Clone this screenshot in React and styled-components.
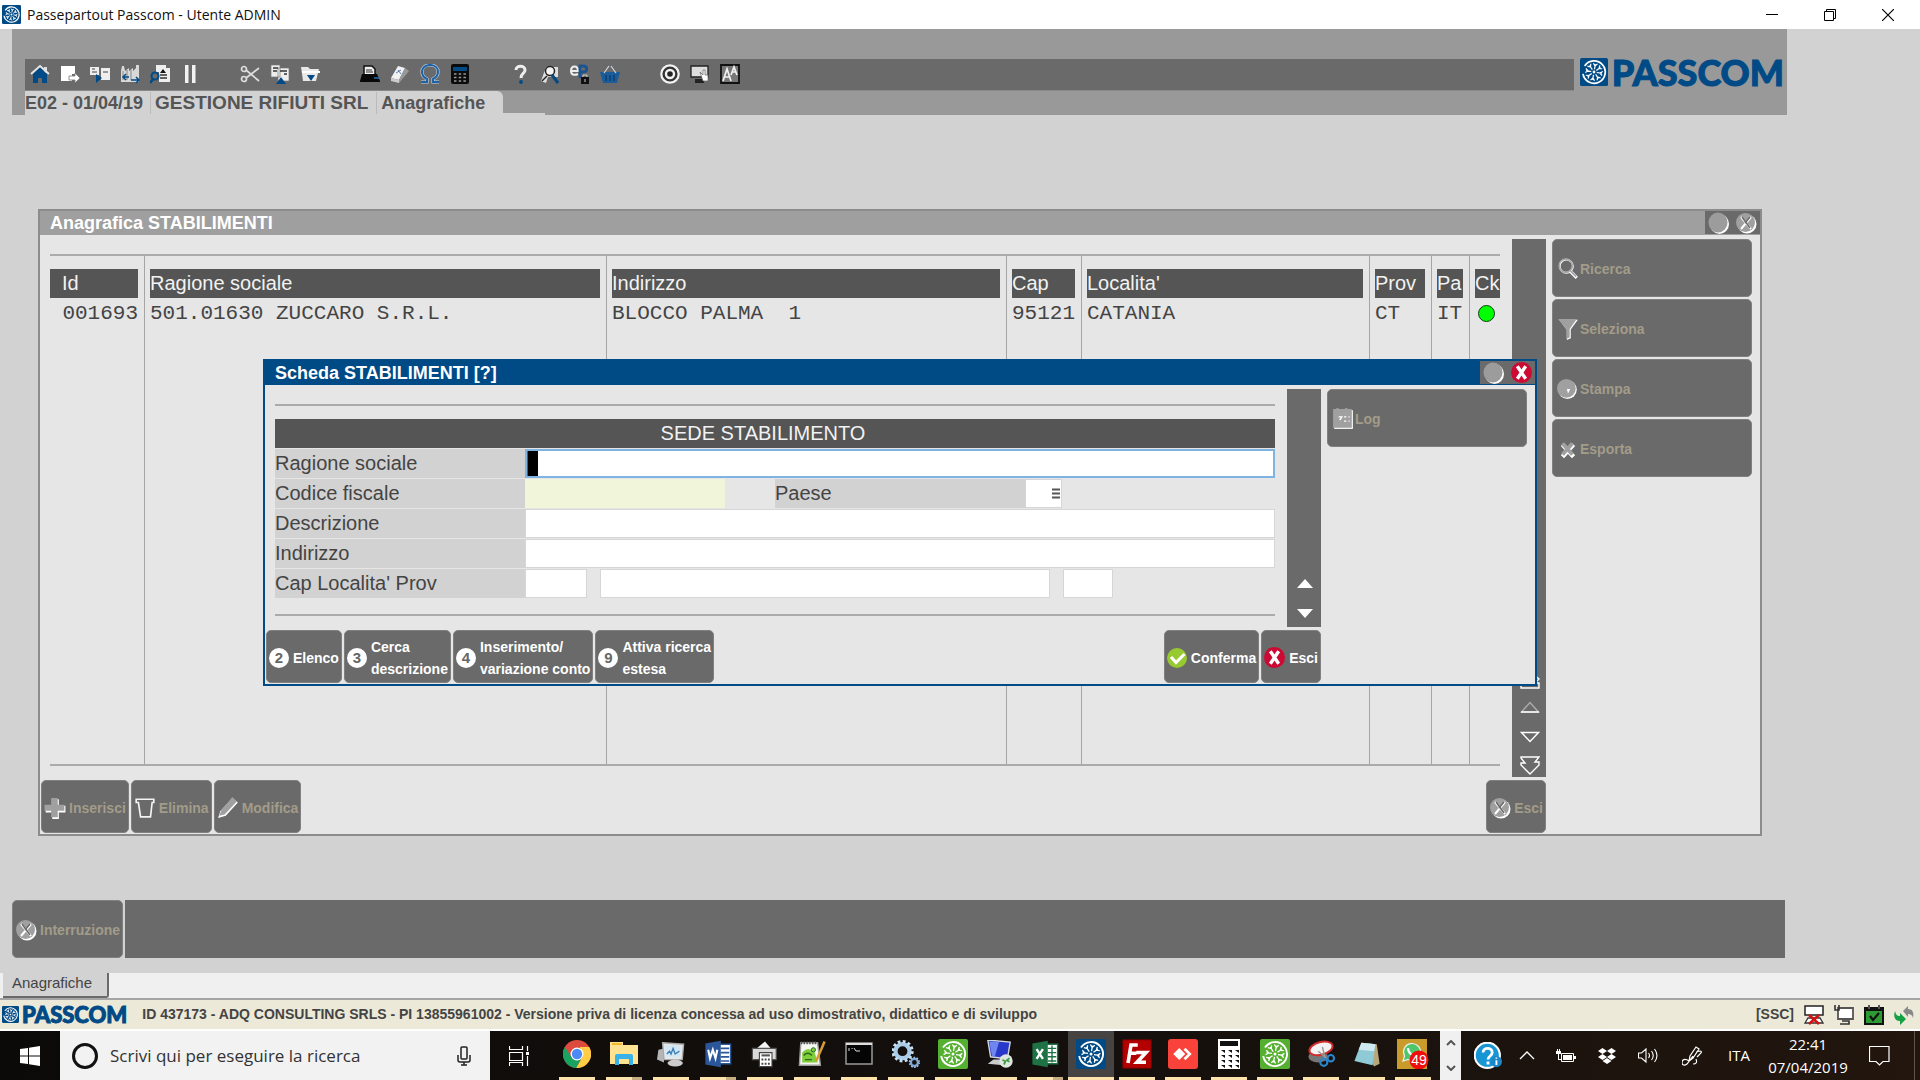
import React from "react";
import styled, { createGlobalStyle, css } from "styled-components";

const sans = '"Liberation Sans", Arial, sans-serif';
const mono = '"Liberation Mono", monospace';
const system = '"Open Sans", "Segoe UI", sans-serif';
const blue = "#004a86";

const GlobalStyle = createGlobalStyle`
  *, *::before, *::after { box-sizing: border-box; }
  body { margin: 0; background: #d2d2d2; font-family: ${sans}; color: #444; }
  button, input { font: inherit; color: inherit; margin: 0; padding: 0; border: 0; border-radius: 0; background: none; outline: 0; }
  svg { display: block; flex: none; }
`;

/* ---------- shell ---------- */

const Screen = styled.div`
  display: flex;
  flex-direction: column;
  min-height: 100vh;
`;

const TitleBar = styled.header`
  display: flex;
  align-items: center;
  height: 29px;
  padding: 0 3px 0 2px;
  background: #fff;
  color: #111;
  font: 14px/28px ${system};
`;

const AppName = styled.span`
  flex: 1;
  padding-left: 6px;
`;

const CaptionButton = styled.button`
  display: grid;
  place-items: center;
  width: 58px;
  height: 29px;
`;

const Banner = styled.div`
  display: flex;
  flex-direction: column;
  height: 86px;
  margin: 0 133px 0 12px;
  background: #999;
`;

const ToolRow = styled.div`
  display: flex;
  margin-top: 28px;
  height: 34px;
  padding: 0 3px 0 13px;
`;

const ToolBar = styled.div`
  display: flex;
  flex: 1;
  align-self: flex-end;
  gap: 30px;
  height: 32px;
  background: #6a6a6a;
  border-bottom: 1px solid #888;
`;

const ToolGroup = styled.div`
  display: flex;
`;

const ToolButton = styled.button`
  display: grid;
  place-items: center;
  width: 30px;
  height: 30px;
`;

const Brand = styled.div`
  display: flex;
  align-items: center;
  gap: ${(p) => (p.$small ? 3 : 4)}px;
  height: ${(p) => (p.$small ? 29 : 30)}px;
  margin-left: ${(p) => (p.$small ? 0 : 6)}px;
  color: ${blue};
  font: 900 ${(p) => (p.$small ? 22 : 36)}px/1 Lato, sans-serif;
  -webkit-text-stroke: 1px ${blue};
`;

const CrumbRow = styled.div`
  display: flex;
  align-items: flex-end;
  height: 24px;
  padding-left: 13px;
`;

const Crumbs = styled.nav`
  display: flex;
  align-items: center;
  height: 24px;
  padding-right: 18px;
  background: #d2d2d2;
  border-radius: 0 6px 0 0;
  color: #555;
  font: bold 18px/22px ${sans};
`;

const CrumbFoot = styled.div`
  width: 42px;
  height: 2px;
  background: #d2d2d2;
`;

const Crumb = styled.span`
  padding: 0 ${(p) => (p.$last ? 0 : p.$wide ? 8 : 7)}px 0 ${(p) => (p.$first ? 0 : 4)}px;
  border-right: ${(p) => (p.$last ? "0" : "1px solid #bbb")};
  font-size: ${(p) => (p.$wide ? 19 : 18)}px;
`;

const Workspace = styled.main`
  position: relative;
  display: flex;
  flex: 1;
  flex-direction: column;
  padding: 94px 158px 64px 38px;
`;

/* ---------- windows ---------- */

const Frame = styled.section`
  display: flex;
  flex-direction: column;
  background: #e6e6e6;
  border: 2px solid ${(p) => (p.$active ? blue : "#8c8c8c")};
  ${(p) =>
    p.$active
      ? css`
          position: absolute;
          top: 244px;
          left: 263px;
          right: 383px;
        `
      : css`
          flex: 1;
        `}
`;

const FrameTitle = styled.div`
  display: flex;
  justify-content: space-between;
  height: 24px;
  padding-left: 10px;
  background: ${(p) => (p.$active ? blue : "#9f9f9f")};
  color: #fff;
  font: bold 18px/24px ${sans};
`;

const FrameTools = styled.div`
  display: flex;
  justify-content: space-between;
  align-items: center;
  width: 55px;
  height: 23px;
  padding: 0 3px;
  background: #6a6a6a;
`;

const RoundButton = styled.button`
  display: grid;
  place-items: center;
`;

const FrameBody = styled.div`
  display: flex;
  flex: 1;
  padding-top: 4px;
`;

const FrameMain = styled.div`
  display: flex;
  flex: 1;
  flex-direction: column;
  min-width: 0;
`;

const Upper = styled.div`
  display: flex;
  flex: 1;
  gap: 12px;
  padding-left: 10px;
`;

const Content = styled.div`
  display: flex;
  flex: 1;
  flex-direction: column;
  margin: 15px 0 11px;
  border: solid #ababab;
  border-width: 2px 0;
`;

const ScrollRail = styled.div`
  display: flex;
  flex-direction: column;
  justify-content: flex-end;
  width: 34px;
  background: #6a6a6a;
`;

const RailButton = styled.button`
  display: grid;
  place-items: center;
  width: 34px;
  height: ${(p) => p.$h || 30}px;
  padding: 2px 0 0 2px;
`;

const FrameFooter = styled.div`
  display: flex;
  gap: 2px;
  padding: 3px 0 1px 1px;
`;

const Spacer = styled.div`
  flex: 1;
`;

const SideBar = styled.aside`
  display: flex;
  flex-direction: column;
  gap: 2px;
  width: 214px;
  padding: 0 8px 0 6px;
`;

const ActionButton = styled.button`
  display: flex;
  align-items: center;
  gap: ${(p) => (p.$side ? 1 : p.disabled ? 3 : 4)}px;
  min-height: ${(p) => (p.$tall || p.$side ? 58 : 53)}px;
  padding: 2px ${(p) => (p.$side ? 4 : 2)}px 0;
  background: #6a6a6a;
  border: 1px solid #808080;
  border-radius: 5px;
  color: ${(p) => (p.disabled ? "#a29c89" : "#fff")};
  font: bold 14px/22px ${sans};
  text-align: left;
  white-space: pre-line;
`;

/* ---------- list ---------- */

const Table = styled.table`
  flex: 1;
  width: 100%;
  border-collapse: separate;
  border-spacing: 0;
  table-layout: fixed;
`;

const Col = styled.col`
  width: ${(p) => (p.$w ? p.$w + "px" : "auto")};
`;

const HeadCell = styled.th`
  height: 43px;
  padding: 12px 6px 1px 5px;
  border-right: 1px solid #a5a5a5;
  color: #f2f2f2;
  font: 20px/29px ${sans};
  text-align: left;
  white-space: nowrap;
  &:first-child { padding-left: 0; }
  &:last-child { padding-right: 0; border-right: 0; }
`;

const HeadFill = styled.span`
  display: block;
  overflow: hidden;
  padding-left: ${(p) => (p.$inset ? 12 : 0)}px;
  background: #555;
`;

const Cell = styled.td`
  height: 30px;
  padding: 0 6px 0 5px;
  border-right: 1px solid #a5a5a5;
  color: #444;
  font: 21px/30px ${mono};
  text-align: ${(p) => (p.$right ? "right" : "left")};
  white-space: pre;
  vertical-align: top;
  &:first-child { padding-left: 0; }
  &:last-child { padding-right: 0; border-right: 0; }
`;

const FillerCell = styled(Cell)`
  height: auto;
`;

const Status = styled.span`
  display: block;
  width: 17px;
  height: 17px;
  margin: 6px 0 0 3px;
  background: #00ff00;
  border: 1px solid #143c14;
  border-radius: 50%;
`;

/* ---------- form ---------- */

const Form = styled.form`
  display: flex;
  flex-direction: column;
  gap: 1px;
  padding: 13px 0 16px;
`;

const FormHeading = styled.h2`
  margin: 0;
  padding-right: 24px;
  background: #555;
  color: #f2f2f2;
  font: 20px/29px ${sans};
  text-align: center;
`;

const FormRow = styled.div`
  display: flex;
  height: 29px;
`;

const Label = styled.label`
  width: 250px;
  background: #d2d2d2;
  color: #444;
  font: 20px/29px ${sans};
`;

const Field = styled.span`
  display: flex;
  flex: ${(p) => (p.$w ? "none" : 1)};
  width: ${(p) => (p.$w ? p.$w + "px" : "auto")};
  margin-right: ${(p) => p.$after || 0}px;
  align-items: center;
  background: ${(p) => (p.$tint ? "#f1f6db" : "#fff")};
  border: ${(p) => (p.$focus ? "2px solid #7fb4e2" : p.$tint ? "0" : "1px solid #d6d6d6")};
`;

const Input = styled.input`
  flex: 1;
  min-width: 0;
  height: 100%;
  font: 20px/24px ${mono};
`;

const BlockCaret = styled.span`
  width: 11px;
  height: 25px;
  background: #000;
  border-left: 1px solid #8a5020;
`;

const ListButton = styled.button`
  display: grid;
  place-items: center;
  width: 10px;
  height: 100%;
`;

/* ---------- bottom ---------- */

const CommandBar = styled.div`
  display: flex;
  gap: 2px;
  margin: 0 135px 15px 12px;
`;

const CommandFill = styled.div`
  flex: 1;
  background: #6a6a6a;
`;

const TabStrip = styled.div`
  display: flex;
  height: 25px;
  padding-left: 3px;
  background: #f0f0f0;
`;

const Tab = styled.button`
  height: 25px;
  padding: 0 15px 3px 9px;
  background: #d2d2d2;
  border: solid #6a6a6a;
  border-width: 0 2px 2px 0;
  border-radius: 0 0 3px 0;
  font: 15px/20px ${sans};
`;

const StatusBar = styled.footer`
  display: flex;
  align-items: center;
  gap: 10px;
  height: 33px;
  padding: 0 6px 0 2px;
  background: #ece9d8;
  border-top: 2px solid #a5a5a5;
  border-bottom: 2px solid #fff;
  color: #444;
  font: bold 14px/29px ${sans};
`;

const License = styled.span`
  flex: 1;
  padding-left: 5px;
`;

const TaskBar = styled.div`
  display: flex;
  height: 49px;
  background: linear-gradient(90deg, #0c0a09, #15100d 60%, #22160e);
  color: #fff;
  font: 15px/23px ${system};
`;

const TaskButton = styled.button`
  display: grid;
  place-items: center;
  flex: none;
  width: ${(p) => p.$w}px;
`;

const Search = styled.label`
  display: flex;
  align-items: center;
  width: 430px;
  padding: 0 16px 0 12px;
  background: #f2f2f2;
`;

const SearchInput = styled.input`
  flex: 1;
  min-width: 0;
  padding-left: 12px;
  color: #333;
  font: 17px/24px ${system};
  &::placeholder { color: #333; opacity: 1; }
`;

const Apps = styled.div`
  display: grid;
  flex: 1;
  grid-template-columns: repeat(9, 47fr) repeat(10, 46fr);
  margin: 0 4px 0 6px;
`;

const AppButton = styled.button`
  display: grid;
  place-items: center;
  grid-template-rows: 46px 3px;
  background: ${(p) => (p.$on ? "#464443" : "none")};
  &::after {
    content: "";
    width: ${(p) => (p.$on ? "100%" : "36px")};
    height: 3px;
    background: linear-gradient(90deg, #fde3ab 72%, ${(p) => (p.$many ? "#c7ae82" : "#fde3ab")} 72%);
  }
`;

const Stepper = styled.div`
  display: flex;
  flex-direction: column;
  width: 21px;
  background: #f0f0f0;
`;

const StepButton = styled.button`
  display: grid;
  flex: 1;
  place-items: center;
`;

const Tray = styled.div`
  display: flex;
  align-items: center;
  width: 459px;
  padding-left: 7px;
`;

const Clock = styled.time`
  width: 92px;
  text-align: center;
`;

const ShowDesktop = styled.div`
  align-self: stretch;
  width: 1px;
  margin-left: 10px;
  background: #5d544e;
`;

/* ---------- drawings ---------- */

const Wheel = ({ size, bg = blue }) => (
  <svg width={size} height={size} viewBox="0 0 30 30">
    <rect width="30" height="30" rx="2" fill={bg} />
    <g fill="none" stroke="#fff">
      <path d="M5 8.500A12 12 0 1 1 3.200 17" strokeWidth="1.900" />
      {[0, 45, 90, 135, 180, 225, 270, 315].map((a) => (
        <path key={a} d="M15 12V6.500M12.800 5.800L15 8.500l2.200-2.700" strokeWidth="1.300" transform={`rotate(${a + 10} 15 15)`} />
      ))}
    </g>
    <circle cx="15" cy="15" r="1.500" fill="#fff" />
  </svg>
);

const Svg = ({ s = 20, h, vb = "0 0 20 20", children }) => (
  <svg width={s} height={h || s} viewBox={vb}>{children}</svg>
);

const tools = [
  [
    ["Home", <Svg><path d="M14 3h3v6h-3z" fill="#ddd" /><path d="M3 10l7-7 7 7v9h-5v-5H8v5H3z" fill={blue} /><path d="M1 10l9-8 9 8" fill="none" stroke="#e6e6e6" strokeWidth="1.800" /></Svg>],
    ["Esci", <Svg><path d="M1 2h14v8h-3v7H1z" fill="#fff" /><path d="M9 12h6V9l5 5-5 5v-3H9z" fill="#fff" stroke="#777" strokeWidth=".8" /></Svg>],
    ["Sposta", <Svg><path d="M0 3h9v8H0zM11 4h9v12h-9z" fill="#eee" /><path d="M2 5h3M2 8h5M13 8h5" stroke="#444" strokeWidth="1.200" /><path d="M6 10l6 4-6 5z" fill={blue} /></Svg>],
    ["Azienda", <Svg><path d="M1 18V7l1-5h2l1 5 4-3v3l4-3v3l3-3V1h3v17z" fill="#d8d8d8" /><path d="M3 7v9M7 6v10M11 6v10" stroke="#888" /><path d="M9 13H4m2-3l-3 3 3 3M11 16h7m-2-3l3 3-3 3" fill="none" stroke={blue} strokeWidth="1.500" /></Svg>],
    ["Trova documento", <Svg><path d="M6 1h10v3h4v14H9V8H6z" fill="#eee" /><path d="M10 9l3-4 3 4z" fill="#111" /><path d="M10 11h7M10 14h7" stroke="#333" strokeWidth="1.300" /><circle cx="5" cy="12" r="3.500" fill="none" stroke={blue} strokeWidth="2" /><path d="M3 15l-3 4" stroke={blue} strokeWidth="2.500" /></Svg>],
    ["Pausa", <Svg><path d="M5 1h3.500v18H5zM12 1h3.500v18H12z" fill="#f2f2f2" /></Svg>],
  ],
  [
    ["Taglia", <Svg><g fill="none" stroke="#ddd" strokeWidth="1.700"><circle cx="4" cy="5" r="2.500" /><circle cx="4" cy="15" r="2.500" /><path d="M6 6l13 11M6 14L19 4" /></g></Svg>],
    ["Copia", <Svg><path d="M1 1h9v12H1zM8 4h11v13H8z" fill="#eee" stroke="#777" strokeWidth=".7" /><path d="M3 4h5M3 7h4M10 7h7M14 10h3" stroke="#333" strokeWidth="1.500" /><path d="M6 20l5-7 5 7z" fill={blue} /></Svg>],
    ["Apri", <Svg><path d="M1 3h7l2 2h9l-3 12H3z" fill="#e8e8e8" /><path d="M2 8h18" stroke="#fff" strokeWidth="2" /><path d="M7 11h8l-4 6z" fill={blue} /></Svg>],
  ],
  [
    ["Stampa", <Svg><path d="M4 10V2h8l3 3v5" fill="#eee" stroke="#111" strokeWidth="1.500" /><path d="M6 6h6M6 8h7" stroke="#333" /><path d="M0 17l2-7h15l3 7v1H0z" fill="#080808" /><path d="M14 14h5" stroke="#2b6db0" strokeWidth="1.500" /></Svg>],
    ["Gomma", <Svg><path d="M1 14L8 2l7 2-6 12z" fill="#f2f2f2" /><path d="M1 14l8 2v3l-8-2z" fill="#ccc" /><path d="M9 16l6-12 4 3-10 12z" fill="#999" /><path d="M6 9l5-3M8 6l3 4" stroke="#5f7fb0" /></Svg>],
    ["Simboli", <Svg><path d="M1 18h6v-3C3 13 2 10 2 8c0-4 3-7 8-7s8 3 8 7c0 2-1 5-5 7v3h6" fill="none" stroke="#c9d6e4" strokeWidth="3.200" /><path d="M1 18h6v-3C3 13 2 10 2 8c0-4 3-7 8-7s8 3 8 7c0 2-1 5-5 7v3h6" fill="none" stroke="#1f63a5" strokeWidth="2.100" /></Svg>],
    ["Calcolatrice", <Svg><rect x="1" width="18" height="20" rx="2" fill="#0b0b0b" /><path d="M3 3h14v4H3z" fill={blue} /><path d="M4 10h12M4 13.500h12M4 17h12" stroke="#999" strokeWidth="1.500" strokeDasharray="2.500 2.200" /></Svg>],
  ],
  [
    ["Aiuto", <Svg><path d="M6 6c0-5 9-5 9 0 0 4-4 3-4 8" fill="none" stroke="#eee" strokeWidth="3" /><circle cx="11" cy="18" r="1.900" fill={blue} /></Svg>],
    ["Cerca", <Svg><path d="M1 17L6 3h12v10H8l-2 6z" fill="#ddd" /><circle cx="10" cy="7" r="4.500" fill="#f4f4f4" stroke="#222" strokeWidth="1.500" /><path d="M12 11l6 8" stroke={blue} strokeWidth="3" /><path d="M2 17l5-5" stroke="#222" strokeWidth="1.500" /></Svg>],
    ["Posta certificata", <Svg><path d="M1 7h7c0-6-7-6-7 0 0 5 5 4 7 3" fill="none" stroke="#eee" strokeWidth="2" /><path d="M10 14V2h3c5 0 5 6 0 6h-3" fill="none" stroke="#1a5592" strokeWidth="2.800" /><path d="M11 13h8v7h-8z" fill="#111" /><path d="M13 13v-2h4v2M15 15v3" fill="none" stroke="#ccc" /></Svg>],
    ["Negozio", <Svg><path d="M0 8h20l-3 11H3z" fill="#1c5c9a" /><path d="M4 9l5-7M16 9l-5-7" fill="none" stroke="#d0d8e0" strokeWidth="1.200" /><path d="M6 11v6M10 11v6M14 11v6" fill="none" stroke="#0a3c6c" strokeWidth="1.300" /></Svg>],
  ],
  [
    ["Obiettivo", <Svg><circle cx="10" cy="10" r="8.700" fill="#333" stroke="#f2f2f2" strokeWidth="2.200" /><circle cx="10" cy="10" r="4" fill="#222" stroke="#f2f2f2" strokeWidth="2.400" /></Svg>],
    ["Schermo", <Svg><path d="M1 2h17v11H1z" fill="#ddd" stroke="#222" strokeWidth="1.300" /><path d="M5 15h9v4H5z" fill="#222" /><path d="M10 8l3 3V6h2v5h3v6h-5z" fill="#fff" stroke="#666" strokeWidth=".7" /></Svg>],
    ["Caratteri", <Svg><path d="M1 1h18v18H1z" fill="#777" stroke="#111" strokeWidth="1.800" /><path d="M3 17L7 5l4 12M4 13h6M11 11l3-8 3 8M12 8h4" fill="none" stroke="#f2f2f2" strokeWidth="1.700" /></Svg>],
  ],
];

const Knob = () => (
  <Svg s={21} h={22} vb="0 0 21 22"><ellipse cx="11.500" cy="12" rx="9.500" ry="10" fill="#fff" /><ellipse cx="10" cy="10.500" rx="9.500" ry="10" fill="#9c9c9c" /></Svg>
);
const GreyX = () => (
  <Svg s={22} h={22} vb="0 0 22 22"><circle cx="12" cy="12" r="9.500" fill="#fff" /><circle cx="10.500" cy="10.500" r="9.500" fill="#a0a0a0" /><path d="M6 5l10 12M16 5L6 17" stroke="#fff" strokeWidth="2" /><path d="M7 5l8 11M15 5l-5 6" stroke="#6a6a6a" strokeWidth="1.500" /></Svg>
);
const RedX = () => (
  <Svg s={21} h={21}><circle cx="10" cy="10" r="10" fill="#cc0a33" /><path d="M6 4l8 12M14 4L6 16" stroke="#fff" strokeWidth="3.200" /></Svg>
);
const GreenCheck = () => (
  <Svg s={20} h={20}><circle cx="10" cy="10" r="10" fill="#97c930" /><path d="M4 9l5 5.500L17.500 6" fill="none" stroke="#fff" strokeWidth="3" /></Svg>
);

const Badge = styled.span`
  display: grid;
  flex: none;
  place-items: center;
  width: 20px;
  height: 20px;
  border-radius: 50%;
  background: #fff;
  color: #666;
  font: bold 15px/20px ${sans};
`;

const disabledIcons = {
  search: <Svg s={22}><circle cx="8.500" cy="7.500" r="6" fill="none" stroke="#fff" strokeWidth="1.600" /><circle cx="8" cy="7" r="6" fill="none" stroke="#aaa" strokeWidth="1.500" /><path d="M12 12l6 6" stroke="#fff" strokeWidth="3" /><path d="M12 11.500l5.500 5.500" stroke="#a5a5a5" strokeWidth="1.500" /></Svg>,
  filter: <Svg s={22}><path d="M2 1.500h17l-6.500 9v8L9 20v-9z" fill="#fff" /><path d="M1 1h17l-6.500 9v7.500L8.500 19v-9z" fill="#a0a0a0" /></Svg>,
  print: <Svg s={22}><circle cx="9.500" cy="10.500" r="8.500" fill="#fff" /><circle cx="8.500" cy="9.500" r="8.500" fill="#a0a0a0" /><path d="M9 10h3l-2 4z" fill="#fff" /></Svg>,
  export: <Svg s={22}><path d="M5 6l10 11M15 6L5 17" stroke="#fff" strokeWidth="4" /><path d="M5 5l9 10M14 5L5 15" stroke="#a0a0a0" strokeWidth="3.500" /></Svg>,
  log: <Svg s={22}><path d="M2 2h17v17H2z" fill="#fff" /><path d="M1 1h3V0h2v1h6V0h2v1h4v17H1z" fill="#a0a0a0" /><path d="M6 8h3l-2 3M11 8h2M15 8h1M11 12h2M15 12h1" fill="none" stroke="#fff" strokeWidth="1.200" /></Svg>,
  plus: <Svg s={22}><path d="M7.500 2h6v6h6v6h-6v6h-6v-6h-6V8h6z" fill="#fff" /><path d="M6.500 1h6v6h6v5.500h-6v6h-6v-6h-6V7h6z" fill="#a0a0a0" /></Svg>,
  bin: <Svg s={22}><path d="M2 2h16v3h-1.500L15 18H6L4 5H2z" fill="none" stroke="#f4f4f4" strokeWidth="1.500" /></Svg>,
  pencil: <Svg s={22}><path d="M1 19l2-6L14 1l5 4L8 17z" fill="#fff" /><path d="M2 17l2-5L14 0l4 4L7 16z" fill="#a0a0a0" /></Svg>,
  stop: <GreyX />,
};

const UpOutline = () => <Svg s={20} h={12} vb="0 0 20 12"><path d="M1.500 11L10 1.500 18.500 11z" fill="none" stroke="#aaa" strokeWidth="1.500" /><path d="M1 11h18" stroke="#fff" strokeWidth="1.500" /></Svg>;
const DownOutline = () => <Svg s={20} h={12} vb="0 0 20 12"><path d="M1.500 1.500L10 10.500 18.500 1.500z" fill="none" stroke="#fff" strokeWidth="1.400" /></Svg>;
const PageUp = () => <Svg s={20} h={19} vb="0 0 20 19"><path d="M1 18h18v-5h-4l4-4L10 1 1 9l4 4H1z" fill="none" stroke="#fff" strokeWidth="1.400" /></Svg>;
const PageDown = () => <Svg s={20} h={19} vb="0 0 20 19"><path d="M1 1h18l-4 5h4v3l-9 9-9-9V7h4L1 2z" fill="none" stroke="#fff" strokeWidth="1.400" /></Svg>;

const apps = [
  { n: "Chrome", i: <Svg s={28}><circle cx="10" cy="10" r="10" fill="#dd4b3e" /><path d="M1.300 5A10 10 0 0 0 9.500 20l4.200-8L6 12z" fill="#1aa260" /><path d="M18.700 5A10 10 0 0 1 9.500 20L14 12l-2-7z" fill="#ffce44" /><circle cx="10" cy="10" r="4.600" fill="#fff" /><circle cx="10" cy="10" r="3.700" fill="#4c8bf5" /></Svg> },
  { n: "Esplora file", many: 1, i: <Svg s={28} h={24} vb="0 0 28 24"><path d="M0 0h13v3h15v19H0z" fill="#ffe391" /><path d="M2 1h10v2H2z" fill="#f4b72b" /><path d="M5 23v-9q0-2 2-2h14q2 0 2 2v9h-4v-6H9v6z" fill="#37b3ea" /></Svg> },
  { n: "Monitor", i: <Svg s={28}><path d="M1 7l4-1v10l-5-2z" fill="#b5b5b5" /><path d="M4 2l15 1-1 11-13 0z" fill="#e4e8ea" stroke="#aaa" /><path d="M6 4l11 .5-.6 7.500H6.500z" fill="#d3e8f6" /><path d="M7 10l2-2 1 2 1.500-4 1.500 4 3-2" fill="none" stroke="#3a7fb8" /><ellipse cx="13" cy="16.500" rx="5.500" ry="2.500" fill="#ccc" /></Svg> },
  { n: "Word", many: 1, i: <Svg s={28}><path d="M10 3h9v14h-9z" fill="#fff" stroke="#2b579a" /><path d="M12 6h6M12 9h6M12 12h6M12 15h6" stroke="#2b579a" strokeWidth="1.200" /><path d="M1 2.500L12 .5v19L1 17.500z" fill="#2b579a" /><path d="M3 7l1.300 6L6.300 7l1.900 6L9.500 7" fill="none" stroke="#fff" strokeWidth="1.500" /></Svg> },
  { n: "Contabilita", i: <Svg s={28}><path d="M4 6l6-5 5 6z" fill="#f5f5f5" /><path d="M1 6h17v8H1z" fill="#d9d9d9" stroke="#555" strokeWidth=".8" /><path d="M6 9h9v10H6z" fill="#fff" stroke="#444" strokeWidth=".8" /><path d="M7.500 11h6" stroke="#555" strokeWidth="1.500" /><path d="M7.500 14h6M7.500 17h6" stroke="#444" strokeDasharray="1.300 1" strokeWidth="1.400" /></Svg> },
  { n: "Notepad++", i: <Svg s={28}><path d="M2 2h12l2 16H1z" fill="#f7f7f2" stroke="#999" /><path d="M2 2h12" stroke="#555" strokeWidth="2" strokeDasharray="1 1" /><path d="M3 9q4-5 9 0 1 4 2 7H3z" fill="#7fce3b" /><path d="M4 11q3-3 6 0M5 14h5" fill="none" stroke="#2d6a1a" /><circle cx="11" cy="7" r="1.500" fill="#7fce3b" stroke="#263" strokeWidth=".7" /><path d="M13 15l6-14" stroke="#d89a33" strokeWidth="1.800" /></Svg> },
  { n: "Prompt", i: <Svg s={28} h={24} vb="0 0 28 24"><path d="M1 1h26v21H1z" fill="#050505" stroke="#999" strokeWidth="1.500" /><path d="M1 2h26" stroke="#ddd" strokeWidth="2" /><path d="M4 6v3M7 6v1M9 6l2 3h4" fill="none" stroke="#ddd" /></Svg> },
  { n: "Servizi", i: <Svg s={28}><circle cx="7.500" cy="8" r="5" fill="none" stroke="#a9cde8" strokeWidth="3" /><circle cx="7.500" cy="8" r="7" fill="none" stroke="#c9e1f2" strokeWidth="2" strokeDasharray="2 1.660" /><circle cx="16" cy="16" r="2.500" fill="none" stroke="#7ea8d8" strokeWidth="1.600" /><circle cx="16" cy="16" r="3.500" fill="none" stroke="#a9c8e8" strokeDasharray="1.200 1" /></Svg> },
  { n: "Passepartout", i: <Wheel size={30} bg="#55b031" /> },
  { n: "Desktop remoto", i: <Svg s={28}><path d="M2 0l16 1.500-2 12-12-1.500z" fill="#2838c8" stroke="#cfd6dd" /><path d="M3 1l7 .5L7 12l-2-.5z" fill="#6f86ee" /><path d="M6 14h7v4l-11-1z" fill="#ccc" /><circle cx="15" cy="15" r="4.800" fill="#dfe5df" /><path d="M12.500 14l2 1.500-1 2M17.500 13l-2 1.500 2 1" fill="none" stroke="#3a9a3a" strokeWidth="1.200" /></Svg> },
  { n: "Excel", many: 1, i: <Svg s={28}><path d="M10 3h9v14h-9z" fill="#fff" stroke="#1f7244" /><path d="M12 6h6M12 9h6M12 12h6M12 15h6M15 4v12" stroke="#1f7244" /><path d="M1 2.500L12 .5v19L1 17.500z" fill="#1f7244" /><path d="M4 6.500l4.500 7M8.500 6.500l-4.500 7" stroke="#fff" strokeWidth="1.700" /></Svg> },
  { n: "Passcom", on: 1, i: <Wheel size={30} /> },
  { n: "FileZilla", i: <Svg s={30}><path d="M.5.500h19v19H.5z" fill="#b30000" stroke="#700" strokeDasharray="1 1" /><path d="M10.500 4H6L4 16M5 9.500h4.500M9.500 9h6.500L10 15.500h6" fill="none" stroke="#fff" strokeWidth="2.400" /></Svg> },
  { n: "AnyDesk", i: <Svg s={30}><rect width="20" height="20" rx="2" fill="#f9423a" /><path d="M7.500 6l4 4-4 4-4-4z" fill="#fff" /><path d="M11 6.500l3.500 3.500-3.500 3.500" fill="none" stroke="#fff" strokeWidth="1.800" /></Svg> },
  { n: "Calcolatrice", i: <Svg s={22} h={30} vb="0 0 22 30"><path d="M0 0h22v30H0z" fill="#fff" /><path d="M2 2h18v5H2z" fill="#111" /><path d="M3 11h4v3zM10 11h4v3zM17 11h4v3zM3 16h4v3zM10 16h4v3zM17 16h4v3zM3 21h4v3zM10 21h4v3zM17 21h4v3zM3 26h4v3zM10 26h4v3zM17 26h4v3z" fill="#111" /></Svg> },
  { n: "Passepartout 2", i: <Wheel size={30} bg="#55b031" /> },
  { n: "Cattura", i: <Svg s={28}><ellipse cx="8" cy="12" rx="7" ry="4" fill="#777" /><ellipse cx="10" cy="6" rx="8.500" ry="4.500" transform="rotate(-15 10 6)" fill="#f3f3f3" stroke="#d02a2a" strokeWidth="1.400" /><path d="M8 8l6 5M11 5l2 8" stroke="#999" /><circle cx="12" cy="16" r="2.500" fill="none" stroke="#2a86cc" strokeWidth="1.500" /><circle cx="17" cy="13" r="2.300" fill="none" stroke="#2a86cc" strokeWidth="1.500" /></Svg> },
  { n: "Blocco note", i: <Svg s={28}><path d="M6 2l11 1 2 14-4 2z" fill="#b9a77a" /><path d="M6 2l10 1-2 15-13-3z" fill="#8ecbd6" /><path d="M6 2l10 1-1 5-11-1z" fill="#cfeaf0" /></Svg> },
  { n: "WhatsApp", i: <Svg s={32} h={30} vb="0 0 32 30"><path d="M0 0h30v30H0z" fill="#c99b2a" /><path d="M6 22l1.500-5A8.500 8.500 0 1 1 11 20.500z" fill="#4fc66a" stroke="#eee" strokeWidth="1.200" /><path d="M11 9q0 6 7 8" fill="none" stroke="#fff" strokeWidth="2.200" /><circle cx="22" cy="21" r="9.500" fill="#f00d0d" /><text x="22" y="26" textAnchor="middle" fontFamily="Liberation Sans" fontSize="14" fill="#fff">49</text></Svg> },
];

const columns = [
  ["Id", 95],
  ["Ragione sociale", 0],
  ["Indirizzo", 400],
  ["Cap", 75],
  ["Localita'", 288],
  ["Prov", 62],
  ["Pa", 38],
  ["Ck", 30],
];

const rows = [
  { id: "001693", name: "501.01630 ZUCCARO S.R.L.", street: "BLOCCO PALMA  1", cap: "95121", city: "CATANIA", prov: "CT", country: "IT" },
];

function FrameButtons({ active }) {
  return (
    <FrameTools>
      <RoundButton type="button" aria-label="Riduci"><Knob /></RoundButton>
      <RoundButton type="button" aria-label="Chiudi">{active ? <RedX /> : <GreyX />}</RoundButton>
    </FrameTools>
  );
}

function Action({ icon, children, ...rest }) {
  return (
    <ActionButton type="button" {...rest}>
      {icon}
      <span>{children}</span>
    </ActionButton>
  );
}

function ListWindow() {
  return (
    <Frame>
      <FrameTitle>Anagrafica STABILIMENTI<FrameButtons /></FrameTitle>
      <FrameBody>
        <FrameMain>
          <Upper>
            <Content>
              <Table>
                <colgroup>{columns.map(([name, w]) => <Col key={name} $w={w} />)}</colgroup>
                <thead>
                  <tr>
                    {columns.map(([name], i) => (
                      <HeadCell key={name}><HeadFill $inset={i === 0}>{name}</HeadFill></HeadCell>
                    ))}
                  </tr>
                </thead>
                <tbody>
                  {rows.map((r) => (
                    <tr key={r.id}>
                      <Cell $right>{r.id}</Cell>
                      <Cell>{r.name}</Cell>
                      <Cell>{r.street}</Cell>
                      <Cell>{r.cap}</Cell>
                      <Cell>{r.city}</Cell>
                      <Cell>{r.prov}</Cell>
                      <Cell>{r.country}</Cell>
                      <Cell><Status /></Cell>
                    </tr>
                  ))}
                  <tr>{columns.map(([name]) => <FillerCell key={name} />)}</tr>
                </tbody>
              </Table>
            </Content>
            <ScrollRail>
              <RailButton type="button" $h={26} aria-label="Pagina su"><PageUp /></RailButton>
              <RailButton type="button" aria-label="Su"><UpOutline /></RailButton>
              <RailButton type="button" aria-label="Giu"><DownOutline /></RailButton>
              <RailButton type="button" $h={26} aria-label="Pagina giu"><PageDown /></RailButton>
            </ScrollRail>
          </Upper>
          <FrameFooter>
            <Action disabled icon={disabledIcons.plus}>Inserisci</Action>
            <Action disabled icon={disabledIcons.bin}>Elimina</Action>
            <Action disabled icon={disabledIcons.pencil}>Modifica</Action>
            <Spacer />
            <Action disabled icon={disabledIcons.stop}>Esci</Action>
          </FrameFooter>
        </FrameMain>
        <SideBar>
          <Action disabled $side icon={disabledIcons.search}>Ricerca</Action>
          <Action disabled $side icon={disabledIcons.filter}>Seleziona</Action>
          <Action disabled $side icon={disabledIcons.print}>Stampa</Action>
          <Action disabled $side icon={disabledIcons.export}>Esporta</Action>
        </SideBar>
      </FrameBody>
    </Frame>
  );
}

function CardDialog() {
  return (
    <Frame $active role="dialog" aria-label="Scheda STABILIMENTI">
      <FrameTitle $active>Scheda STABILIMENTI [?]<FrameButtons active /></FrameTitle>
      <FrameBody>
        <FrameMain>
          <Upper>
            <Content>
              <Form>
                <FormHeading>SEDE STABILIMENTO</FormHeading>
                <FormRow>
                  <Label htmlFor="ragione">Ragione sociale</Label>
                  <Field $focus><BlockCaret /><Input id="ragione" /></Field>
                </FormRow>
                <FormRow>
                  <Label htmlFor="codice">Codice fiscale</Label>
                  <Field $tint $w={200} $after={50}><Input id="codice" /></Field>
                  <Label htmlFor="paese">Paese</Label>
                  <Field $w={37}>
                    <Input id="paese" />
                    <ListButton type="button" aria-label="Elenco paesi">
                      <Svg s={8} h={11} vb="0 0 8 11"><path d="M0 1.500h8M0 5.500h8M0 9.500h8" stroke="#555" strokeWidth="2" /></Svg>
                    </ListButton>
                  </Field>
                </FormRow>
                <FormRow>
                  <Label htmlFor="descrizione">Descrizione</Label>
                  <Field><Input id="descrizione" /></Field>
                </FormRow>
                <FormRow>
                  <Label htmlFor="indirizzo">Indirizzo</Label>
                  <Field><Input id="indirizzo" /></Field>
                </FormRow>
                <FormRow>
                  <Label htmlFor="cap">Cap Localita' Prov</Label>
                  <Field $w={62} $after={13}><Input id="cap" /></Field>
                  <Field $w={450} $after={13}><Input id="localita" aria-label="Localita" /></Field>
                  <Field $w={50}><Input id="prov" aria-label="Prov" /></Field>
                </FormRow>
              </Form>
            </Content>
            <ScrollRail>
              <RailButton type="button" aria-label="Su"><Svg s={16} h={9} vb="0 0 16 9"><path d="M0 9l8-9 8 9z" fill="#fff" /></Svg></RailButton>
              <RailButton type="button" aria-label="Giu"><Svg s={16} h={9} vb="0 0 16 9"><path d="M0 0h16L8 9z" fill="#fff" /></Svg></RailButton>
            </ScrollRail>
          </Upper>
          <FrameFooter>
            <Action icon={<Badge>2</Badge>}>Elenco</Action>
            <Action icon={<Badge>3</Badge>}>{"Cerca\ndescrizione"}</Action>
            <Action icon={<Badge>4</Badge>}>{"Inserimento/\nvariazione conto"}</Action>
            <Action icon={<Badge>9</Badge>}>{"Attiva ricerca\nestesa"}</Action>
            <Spacer />
            <Action icon={<GreenCheck />}>Conferma</Action>
            <Action icon={<RedX />}>Esci</Action>
          </FrameFooter>
        </FrameMain>
        <SideBar>
          <Action disabled $side icon={disabledIcons.log}>Log</Action>
        </SideBar>
      </FrameBody>
    </Frame>
  );
}

export default function App() {
  return (
    <Screen>
      <GlobalStyle />
      <TitleBar>
        <Wheel size={19} />
        <AppName>Passepartout Passcom - Utente ADMIN</AppName>
        <CaptionButton type="button" aria-label="Riduci a icona"><Svg s={12} vb="0 0 12 12"><path d="M0 5.500h12" stroke="#000" /></Svg></CaptionButton>
        <CaptionButton type="button" aria-label="Ripristina"><Svg s={12} vb="0 0 12 12"><path d="M.5 2.500h9v9h-9zM2.500 2.500v-2h9v9h-2" fill="none" stroke="#000" /></Svg></CaptionButton>
        <CaptionButton type="button" aria-label="Chiudi finestra"><Svg s={12} vb="0 0 12 12"><path d="M0 0l12 12M12 0L0 12" stroke="#000" strokeWidth="1.200" /></Svg></CaptionButton>
      </TitleBar>
      <Banner>
        <ToolRow>
          <ToolBar>
            {tools.map((group, g) => (
              <ToolGroup key={g}>
                {group.map(([name, icon]) => <ToolButton key={name} type="button" aria-label={name}>{icon}</ToolButton>)}
              </ToolGroup>
            ))}
          </ToolBar>
          <Brand><Wheel size={28} />PASSCOM</Brand>
        </ToolRow>
        <CrumbRow>
          <Crumbs>
            <Crumb $first>E02 - 01/04/19</Crumb>
            <Crumb $wide>GESTIONE RIFIUTI SRL</Crumb>
            <Crumb $last>Anagrafiche</Crumb>
          </Crumbs>
          <CrumbFoot />
        </CrumbRow>
      </Banner>
      <Workspace>
        <ListWindow />
        <CardDialog />
      </Workspace>
      <CommandBar>
        <Action disabled $tall icon={disabledIcons.stop}>Interruzione</Action>
        <CommandFill />
      </CommandBar>
      <TabStrip><Tab type="button">Anagrafiche</Tab></TabStrip>
      <StatusBar>
        <Brand $small><Wheel size={17} />PASSCOM</Brand>
        <License>ID 437173 - ADQ CONSULTING SRLS - PI 13855961002 - Versione priva di licenza concessa ad uso dimostrativo, didattico e di sviluppo</License>
        <span>[SSC]</span>
        <Svg><path d="M1 1h18v9H1z" fill="#fff" stroke="#222" strokeWidth="1.500" /><path d="M1 18l3-5h12l3 5z" fill="#fff" stroke="#333" strokeWidth="1.300" /><path d="M5 10l10 9M15 10L5 19" stroke="#d01212" strokeWidth="2.600" /></Svg>
        <Svg><path d="M4 3h15v11H4z" fill="#fff" stroke="#555" strokeWidth="1.800" /><path d="M1 0v5h4V0M8 16h7v3H6" fill="none" stroke="#333" strokeWidth="1.600" /></Svg>
        <Svg><path d="M0 2h20v18H0z" fill="#111" /><path d="M2 6h16v12H2z" fill="#2e9a34" /><path d="M5 0v4M15 0v4" stroke="#555" strokeWidth="2" /><path d="M6 11l3 4 6-7" fill="none" stroke="#111" strokeWidth="2.200" /></Svg>
        <Svg><path d="M9 6l5-5v3c5 0 6 4 5 9-1-3-2-4-5-4v3z" fill="#888" /><path d="M12 14l-6 6v-4C1 16-1 12 1 6c1 4 2 5 5 5V8z" fill="#16a043" /></Svg>
      </StatusBar>
      <TaskBar>
        <TaskButton $w={60} type="button" aria-label="Start"><Svg><path d="M0 3l8-1v7.500H0zM9 1.800L20 0v9.500H9zM0 10.500h8V18l-8-1zM9 10.500h11V20L9 18.200z" fill="#fff" /></Svg></TaskButton>
        <Search>
          <Svg s={26} vb="0 0 26 26"><circle cx="13" cy="13" r="11.500" fill="none" stroke="#111" strokeWidth="3" /></Svg>
          <SearchInput aria-label="Ricerca" placeholder="Scrivi qui per eseguire la ricerca" />
          <Svg s={20} vb="0 0 20 20"><rect x="7" y="1" width="6" height="12" rx="1" fill="none" stroke="#222" strokeWidth="1.500" /><path d="M4 9v5q0 2 2 2h8q2 0 2-2V9M10 16v3M7 19h6" fill="none" stroke="#222" strokeWidth="1.500" /></Svg>
        </Search>
        <TaskButton $w={58} type="button" aria-label="Visualizzazione attivita"><Svg><path d="M.5 0v3.500h13V0M.5 6.500h13v8H.5zM.5 20v-3.500h13V20M18.500 0v5M18.500 10v10" fill="none" stroke="#fff" strokeWidth="1.200" /><path d="M17 6h3v3h-3z" fill="#fff" /></Svg></TaskButton>
        <Apps>
          {apps.map((a) => <AppButton key={a.n} type="button" aria-label={a.n} $on={a.on} $many={a.many}>{a.i}</AppButton>)}
        </Apps>
        <Stepper>
          <StepButton type="button" aria-label="Scorri su"><Svg s={10} h={6} vb="0 0 10 6"><path d="M1 5l4-4 4 4" fill="none" stroke="#555" strokeWidth="2" /></Svg></StepButton>
          <StepButton type="button" aria-label="Scorri giu"><Svg s={10} h={6} vb="0 0 10 6"><path d="M1 1l4 4 4-4" fill="none" stroke="#555" strokeWidth="2" /></Svg></StepButton>
        </Stepper>
        <Tray>
          <TaskButton $w={40} type="button" aria-label="Guida"><Svg s={28}><circle cx="9.500" cy="9.500" r="9" fill="#1795d4" stroke="#fff" strokeWidth="1.500" /><path d="M6.500 7.500c0-4 6.500-4 6.500 0 0 2.500-3 2.500-3 5M10 14v2" fill="none" stroke="#fff" strokeWidth="2" /><circle cx="16" cy="14" r="4" fill="#1b86c8" /><path d="M16 13v3.500M16 11v1" stroke="#fff" strokeWidth="1.300" /></Svg></TaskButton>
          <TaskButton $w={38} type="button" aria-label="Mostra icone nascoste"><Svg s={16} h={9} vb="0 0 16 9"><path d="M1 8l7-7 7 7" fill="none" stroke="#fff" strokeWidth="1.300" /></Svg></TaskButton>
          <TaskButton $w={40} type="button" aria-label="Batteria"><Svg s={20} h={14} vb="0 0 20 14"><path d="M5.500 4.500h12v8h-12z" fill="none" stroke="#fff" /><path d="M7 6h9v5H7z" fill="#fff" /><path d="M18 7h2v3h-2zM0 2h5v3H3v5h2v1H2V5H0zM1 0h1v2H1zM3 0h1v2H3z" fill="#fff" /></Svg></TaskButton>
          <TaskButton $w={42} type="button" aria-label="Dropbox"><Svg s={18} h={16} vb="0 0 18 16"><path d="M4.500 0L9 3 4.500 6 0 3zM13.500 0L18 3l-4.500 3L9 3zM4.500 6L9 9l-4.500 3L0 9zM13.500 6L18 9l-4.500 3L9 9zM9 10l4.500 3L9 16l-4.500-3z" fill="#fff" /></Svg></TaskButton>
          <TaskButton $w={40} type="button" aria-label="Volume"><Svg s={20} h={17} vb="0 0 20 17"><path d="M.5 6h3L8 2v13l-4.500-4h-3zM10.500 6q2 2.500 0 5M13.500 4q3.500 4.500 0 9M16.500 2q5 6.500 0 13" fill="none" stroke="#fff" strokeWidth="1.100" /></Svg></TaskButton>
          <TaskButton $w={48} type="button" aria-label="Penna"><Svg><path d="M7 15l1-5 6-9 3 2-6 9zM14 6l4-1q2 0 1 2l-4 4M7 15c-9-6-9 8-2 3l6-8M11 18q5 0 3-5" fill="none" stroke="#fff" strokeWidth="1.200" /></Svg></TaskButton>
          <TaskButton $w={46} type="button">ITA</TaskButton>
          <Clock dateTime="2019-04-07T22:41">22:41<br />07/04/2019</Clock>
          <TaskButton $w={50} type="button" aria-label="Notifiche"><Svg s={21} h={20} vb="0 0 21 20"><path d="M.5.500h19.500v15h-6l-3.500 3.500L7 15.500H.500z" fill="none" stroke="#fff" strokeWidth="1.200" /></Svg></TaskButton>
          <ShowDesktop />
        </Tray>
      </TaskBar>
    </Screen>
  );
}
